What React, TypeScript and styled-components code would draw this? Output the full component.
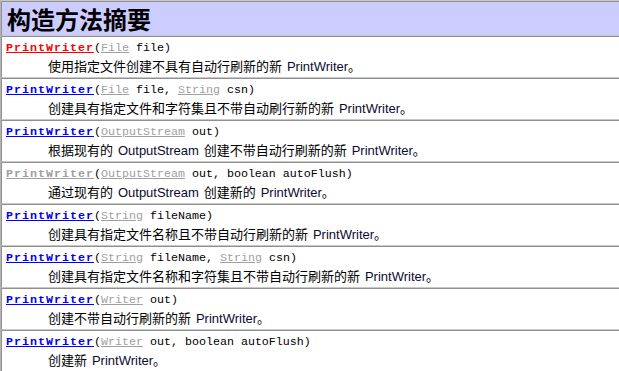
import { createGlobalStyle } from 'styled-components';
import styled from 'styled-components';

type LinkTone = 'red' | 'blue' | 'gray';

type Param = {
    type: string,
    name: string,
}

type Part = {
    text: string,
    latin?: boolean,
}

type CtorProps = {
    tone: LinkTone,
    params: Param[],
    desc: Part[],
}

const toneColors: Record<LinkTone, string> = {
    red: '#ff0000',
    blue: '#0000ff',
    gray: '#a0a0a0',
};

const ctors: CtorProps[] = [
    {
        tone: 'red',
        params: [{ type: 'File', name: 'file' }],
        desc: [{ text: '使用指定文件创建不具有自动行刷新的新 ' }, { text: 'PrintWriter', latin: true }, { text: '。' }],
    },
    {
        tone: 'blue',
        params: [{ type: 'File', name: 'file' }, { type: 'String', name: 'csn' }],
        desc: [{ text: '创建具有指定文件和字符集且不带自动刷行新的新 ' }, { text: 'PrintWriter', latin: true }, { text: '。' }],
    },
    {
        tone: 'blue',
        params: [{ type: 'OutputStream', name: 'out' }],
        desc: [
            { text: '根据现有的 ' },
            { text: 'OutputStream', latin: true },
            { text: ' 创建不带自动行刷新的新 ' },
            { text: 'PrintWriter', latin: true },
            { text: '。' },
        ],
    },
    {
        tone: 'gray',
        params: [{ type: 'OutputStream', name: 'out' }, { type: 'boolean', name: 'autoFlush' }],
        desc: [
            { text: '通过现有的 ' },
            { text: 'OutputStream', latin: true },
            { text: ' 创建新的 ' },
            { text: 'PrintWriter', latin: true },
            { text: '。' },
        ],
    },
    {
        tone: 'blue',
        params: [{ type: 'String', name: 'fileName' }],
        desc: [{ text: '创建具有指定文件名称且不带自动行刷新的新 ' }, { text: 'PrintWriter', latin: true }, { text: '。' }],
    },
    {
        tone: 'blue',
        params: [{ type: 'String', name: 'fileName' }, { type: 'String', name: 'csn' }],
        desc: [{ text: '创建具有指定文件名称和字符集且不带自动行刷新的新 ' }, { text: 'PrintWriter', latin: true }, { text: '。' }],
    },
    {
        tone: 'blue',
        params: [{ type: 'Writer', name: 'out' }],
        desc: [{ text: '创建不带自动行刷新的新 ' }, { text: 'PrintWriter', latin: true }, { text: '。' }],
    },
    {
        tone: 'blue',
        params: [{ type: 'Writer', name: 'out' }, { type: 'boolean', name: 'autoFlush' }],
        desc: [{ text: '创建新 ' }, { text: 'PrintWriter', latin: true }, { text: '。' }],
    },
];

// primitive types are plain text, the rest are links
const primitives = ['boolean'];

export default function App(): JSX.Element {
    return (
        <>
            <GlobalStyle />
            <SummaryTable>
                <HeaderCell>构造方法摘要</HeaderCell>
                {ctors.map((c, i) => (
                    <Cell key={i}>
                        <Signature>
                            <CtorLink $tone={c.tone}>PrintWriter</CtorLink>
                            (
                            {c.params.map((p, j) => (
                                <span key={j}>
                                    {j > 0 && ', '}
                                    {primitives.includes(p.type)
                                        ? p.type
                                        : <TypeLink>{p.type}</TypeLink>}
                                    {' ' + p.name}
                                </span>
                            ))}
                            )
                        </Signature>
                        <Description>
                            {c.desc.map((d, k) =>
                                d.latin ? <Latin key={k}>{d.text}</Latin> : <span key={k}>{d.text}</span>
                            )}
                        </Description>
                    </Cell>
                ))}
            </SummaryTable>
        </>
    );
}

const GlobalStyle = createGlobalStyle`
    html, body {
        margin: 0;
        padding: 0;
        background: #ffffff;
        overflow: hidden;
    }
`;

const SummaryTable = styled.div`
    display: flex;
    flex-direction: column;
    width: 640px;
    border-top: 1px solid #c8c8c8;
    border-left: 1px solid #b4b4b4;
`;

const HeaderCell = styled.div`
    height: 27px;
    padding: 3px 3px 3px 5px;
    background: #ccccff;
    border-top: 1px solid #909090;
    border-left: 1px solid #909090;
    border-bottom: 1px solid #c8c8c8;
    font-family: "Noto Sans CJK SC", sans-serif;
    font-weight: 700;
    font-size: 24px;
    line-height: 27px;
    color: #000000;
`;

const Cell = styled.div`
    height: 34px;
    padding: 3px 3px 3px 4px;
    border-top: 1px solid #909090;
    border-left: 1px solid #909090;
    border-bottom: 1px solid #c8c8c8;
    background: #ffffff;
`;

const Signature = styled.div`
    height: 17px;
    font-family: "Liberation Mono", monospace;
    font-size: 11.67px;
    line-height: 17px;
    color: #000000;
    white-space: pre;
`;

const CtorLink = styled.span<{ $tone: LinkTone }>`
    font-weight: 700;
    letter-spacing: 1px;
    color: ${p => toneColors[p.$tone]};
    text-decoration: underline;
`;

const TypeLink = styled.span`
    color: #a0a0a0;
    text-decoration: underline;
`;

const Description = styled.div`
    height: 17px;
    padding-left: 42px;
    font-family: "Noto Sans CJK SC", sans-serif;
    font-size: 13px;
    line-height: 17px;
    word-spacing: 2px;
    color: #000000;
    white-space: pre;
`;

const Latin = styled.span`
    font-family: "Liberation Sans", Arial, sans-serif;
    color: #0a0a30;
`;
